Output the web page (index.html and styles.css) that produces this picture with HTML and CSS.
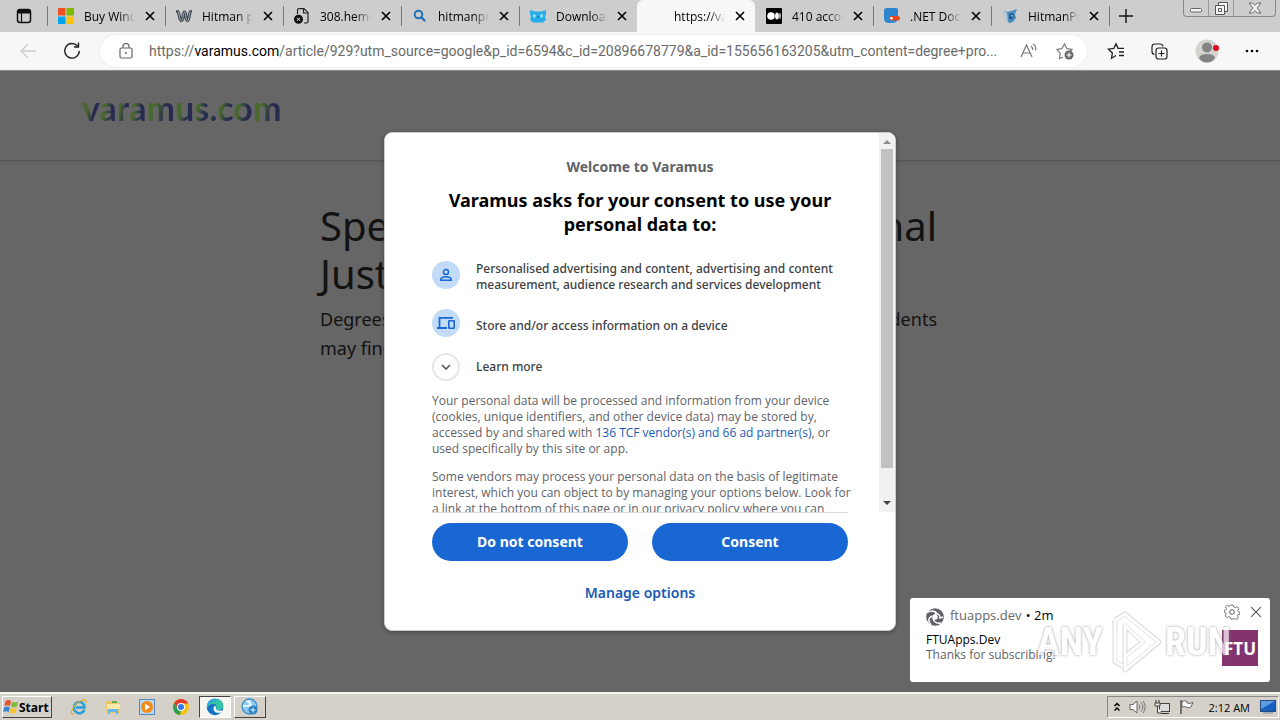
FILE: index.html
```html
<!DOCTYPE html>
<html lang="en">
<head>
<meta charset="utf-8">
<title>varamus.com</title>
<link rel="stylesheet" href="styles.css">
</head>
<body>
<svg class="defs" aria-hidden="true">
  <symbol id="close" viewBox="0 0 10 10"><path d="M1 1l8 8M9 1L1 9" fill="none" stroke="currentColor" stroke-width="1.6"/></symbol>
</svg>

<header class="tabbar">
  <button class="tab-actions" aria-label="Tab actions menu">
    <svg width="16" height="16" viewBox="0 0 16 16"><rect x="1.5" y="1.5" width="13" height="13" rx="2.5" fill="none" stroke="#111" stroke-width="1.5"/><path d="M2 2h12v3.5H2z" fill="#111"/><path d="M5.5 5v9" stroke="#111" stroke-width="1.2"/></svg>
  </button>
  <nav class="tabs" aria-label="Open tabs">
    <div class="tab">
      <svg class="fav" viewBox="0 0 16 16"><path d="M0 0h7.5v7.5H0z" fill="#f25022"/><path d="M8.500 0H16v7.500H8.500z" fill="#7fba00"/><path d="M0 8.500h7.500V16H0z" fill="#00a4ef"/><path d="M8.500 8.500H16V16H8.500z" fill="#ffc20a"/></svg>
      <span class="title">Buy Wind</span><button class="x" aria-label="Close tab"><svg><use href="#close"/></svg></button>
    </div>
    <div class="tab">
      <svg class="fav" viewBox="0 0 16 16"><path d="M1.500 3.500C3.500 3.500 3 12.500 5.300 12.500S7 4 8.500 4s1 8.500 3 8.500 1.500-9 3.200-9" fill="none" stroke="#3c4650" stroke-width="3.200" stroke-linecap="round"/><path d="M1.500 3.500C3.500 3.500 3 12.500 5.300 12.500S7 4 8.500 4s1 8.500 3 8.500 1.500-9 3.200-9" fill="none" stroke="#c4cace" stroke-width=".8"/></svg>
      <span class="title">Hitman pr</span><button class="x" aria-label="Close tab"><svg><use href="#close"/></svg></button>
    </div>
    <div class="tab">
      <svg class="fav" viewBox="0 0 16 16"><path d="M3.500 6V2Q3.500.7 5 .7h5l4 4v8.800q0 1.500-1.500 1.500H10M9.500 1v4H14" fill="none" stroke="#222" stroke-width="1.200"/><circle cx="4.500" cy="11.300" r="4.500" fill="#111"/><path d="M3 9.800l3 3M6 9.800l-3 3" stroke="#fff"/></svg>
      <span class="title">308.heme</span><button class="x" aria-label="Close tab"><svg><use href="#close"/></svg></button>
    </div>
    <div class="tab">
      <svg class="fav" viewBox="0 0 16 16"><circle cx="6.500" cy="6.500" r="3.800" fill="none" stroke="#2472ba" stroke-width="2"/><path d="M9.500 9.500l3 3" stroke="#2472ba" stroke-width="2.400" stroke-linecap="round"/></svg>
      <span class="title">hitmanpro</span><button class="x" aria-label="Close tab"><svg><use href="#close"/></svg></button>
    </div>
    <div class="tab">
      <svg class="fav" viewBox="0 0 16 16"><path d="M0 2l5 1.500h6L16 2v4l-1 3 1 3-3 2.500H3L0 12l1-3-1-3z" fill="#27aee8"/><path d="M3 6l3 1-1 3-2-1zM13 6l-3 1 1 3 2-1z" fill="#9ce2ff"/><path d="M7 8l1 3 1-3z" fill="#1476b4"/></svg>
      <span class="title">Download</span><button class="x" aria-label="Close tab"><svg><use href="#close"/></svg></button>
    </div>
    <div class="tab active">
      <span class="fav"></span>
      <span class="title">https://va</span><button class="x" aria-label="Close tab"><svg><use href="#close"/></svg></button>
    </div>
    <div class="tab">
      <svg class="fav" viewBox="0 0 16 16"><rect width="16" height="16" rx="1" fill="#000"/><circle cx="5" cy="8" r="3.800" fill="#fff"/><ellipse cx="11" cy="8" rx="1.900" ry="3.600" fill="#fff"/><ellipse cx="14" cy="8" rx=".7" ry="3.200" fill="#fff"/></svg>
      <span class="title">410 accou</span><button class="x" aria-label="Close tab"><svg><use href="#close"/></svg></button>
    </div>
    <div class="tab">
      <svg class="fav" viewBox="0 0 16 16"><path d="M3 0h9q2 0 2 2v7q0 6-6 6H5q-5 0-5-5V3q0-3 3-3z" fill="#2f86d0"/><rect x="5" y="8" width="11" height="4.500" rx="2.200" fill="#e8481c"/><circle cx="7.500" cy="10.200" r="1.300" fill="#fff"/></svg>
      <span class="title">.NET Docu</span><button class="x" aria-label="Close tab"><svg><use href="#close"/></svg></button>
    </div>
    <div class="tab">
      <svg class="fav" viewBox="0 0 16 16"><path d="M1 3l4 1 4-1 6-2-2 5 1 4-3 4-4 1-3-4z" fill="#4b8fbe"/><path d="M1 3l4 2 1 8-3-3z" fill="#b4cfe0"/><path d="M7 6l4-1 1 4-3 3-2-2z" fill="#1f5f90"/><path d="M8.500 7.500l2-.5v2z" fill="#cfe6f4"/></svg>
      <span class="title">HitmanPr</span><button class="x" aria-label="Close tab"><svg><use href="#close"/></svg></button>
    </div>
    <button class="newtab" aria-label="New tab"><svg width="14" height="14" viewBox="0 0 14 14"><path d="M7 0v14M0 7h14" stroke="#111" stroke-width="1.400"/></svg></button>
  </nav>
  <div class="winctl">
    <button aria-label="Minimize"><svg width="12" height="12" viewBox="0 0 12 12"><rect x=".5" y="6.500" width="11" height="3.500" rx="1" fill="#f4f4f4" stroke="#666"/></svg></button>
    <button aria-label="Restore"><svg width="13" height="13" viewBox="0 0 13 13"><path d="M3.500.5h9v9h-9z" fill="#f4f4f4" stroke="#555"/><path d="M.5 3.500h9v9h-9zM3.500 6.500h3v3h-3z" fill="#f4f4f4" stroke="#555"/></svg></button>
    <button aria-label="Close"><svg width="14" height="12" viewBox="0 0 14 12"><path d="M1 1h3.500L7 3.500 9.500 1H13L9 6l4 5H9.500L7 8.500 4.500 11H1l4-5z" fill="#f4f4f4" stroke="#666"/></svg></button>
  </div>
</header>

<div class="toolbar">
  <button class="tool" aria-label="Back"><svg width="18" height="16" viewBox="0 0 18 16"><path d="M9 1L2 8l7 7M2 8h15" fill="none" stroke="#ccc" stroke-width="1.300"/></svg></button>
  <button class="tool" aria-label="Refresh"><svg width="18" height="18" viewBox="0 0 18 18"><path d="M14.500 4A7.300 7.300 0 1 0 16.300 9M15.500.5V5H11" fill="none" stroke="#222" stroke-width="1.400"/></svg></button>
  <div class="address">
    <svg width="14" height="16" viewBox="0 0 14 16"><rect x="1" y="5" width="12" height="10" rx="1.500" fill="none" stroke="#666" stroke-width="1.200"/><path d="M4 5V3.500a3 3 0 0 1 6 0V5" fill="none" stroke="#666" stroke-width="1.200"/><circle cx="7" cy="10" r="1" fill="#666"/></svg>
    <span class="url">https://<b>varamus.com</b>/article/929?utm_source=google&amp;p_id=6594&amp;c_id=20896678779&amp;a_id=155656163205&amp;utm_content=degree+pro...</span>
    <button aria-label="Read aloud"><svg width="18" height="16" viewBox="0 0 18 16"><path d="M1 14L6.500 2 12 14M3 10h7M11 3q2 1.500 1.500 4M13 1q3.500 2 2.500 6.500" fill="none" stroke="#777" stroke-width="1.200"/></svg></button>
    <button aria-label="Add to favorites"><svg width="18" height="18" viewBox="0 0 18 18"><path d="M7 15l-3.500 1.500.7-5L1 7.500l4.800-.8L8.500 2l2.500 4.700 5 .8-2 2" fill="none" stroke="#777" stroke-width="1.200"/><circle cx="13" cy="13" r="4.500" fill="#666"/><path d="M13 10.500v5M10.500 13h5" stroke="#fff" stroke-width="1.200"/></svg></button>
  </div>
  <div class="actions">
    <button aria-label="Favorites"><svg width="18" height="18" viewBox="0 0 18 18"><path d="M9 13.500l-4.500 2.700.9-5.200-4-3.800L6.800 6.500 9 1.800l2 4.500h6M12 10h5M12 13.500h5" fill="none" stroke="#222" stroke-width="1.300"/></svg></button>
    <button aria-label="Collections"><svg width="18" height="18" viewBox="0 0 18 18"><path d="M3.500 12.500Q1 12 1 9.500V5q0-3 3-3h5q2.500 0 3 2.500" fill="none" stroke="#222" stroke-width="1.200"/><rect x="5" y="6" width="11" height="11" rx="2.500" fill="none" stroke="#222" stroke-width="1.200"/><path d="M10.500 8.500v6M7.500 11.500h6" stroke="#222" stroke-width="1.200"/></svg></button>
    <button aria-label="Profile"><svg width="24" height="24" viewBox="0 0 24 24"><circle cx="12" cy="12" r="11.500" fill="#d5d3d0"/><circle cx="12" cy="8.500" r="5" fill="#858282"/><path d="M4 19q1-4 8-4t8 4q-3 4.500-8 4.500T4 19z" fill="#858282"/><circle cx="21" cy="9" r="3" fill="#e00b1c"/></svg></button>
    <button aria-label="Settings and more"><svg width="14" height="4" viewBox="0 0 14 4"><circle cx="2" cy="2" r="1.300"/><circle cx="7" cy="2" r="1.300"/><circle cx="12" cy="2" r="1.300"/></svg></button>
  </div>
</div>

<main class="page">
  <div class="site-header">
    <a class="logo" href="#"><i>v</i><i>a</i><i>r</i><i>a</i><i>m</i><i>u</i><i>s</i><i>.</i><i>c</i><i>o</i><i>m</i></a>
  </div>
  <article class="article">
    <h1><span>Spec</span><span>nal</span></h1>
    <h1>Just</h1>
    <p><span>Degrees</span><span>dents</span></p>
    <p>may find</p>
  </article>

  <section class="dialog" role="dialog" aria-labelledby="ask">
    <div class="scroller">
      <p class="welcome">Welcome to Varamus</p>
      <h2 id="ask">Varamus asks for your consent to use your<br>personal data to:</h2>
      <ul class="purposes">
        <li><span class="disc"><svg width="14" height="14" viewBox="0 0 14 14"><circle cx="7" cy="4" r="2.500" fill="none" stroke="#1967d2" stroke-width="1.400"/><path d="M1.700 12.300v-1Q2.500 8.700 7 8.700t5.300 2.600v1z" fill="none" stroke="#1967d2" stroke-width="1.400"/></svg></span>
          <span>Personalised advertising and content, advertising and content<br>measurement, audience research and services development</span></li>
        <li><span class="disc"><svg width="20" height="14" viewBox="0 0 20 14"><path d="M17 1.800H3.500V11M1 12h10" fill="none" stroke="#1967d2" stroke-width="1.800"/><rect x="12.800" y="4.800" width="5.400" height="7.400" rx=".5" fill="none" stroke="#1967d2" stroke-width="1.600"/></svg></span>
          <span class="single">Store and/or access information on a device</span></li>
        <li><button class="disc more" id="learn" aria-label="Learn more"><svg width="10" height="6" viewBox="0 0 10 6"><path d="M1 1l4 4 4-4" fill="none" stroke="#555" stroke-width="1.600"/></svg></button>
          <label for="learn">Learn more</label></li>
      </ul>
      <p class="legal">Your personal data will be processed and information from your device<br>(cookies, unique identifiers, and other device data) may be stored by,<br>accessed by and shared with <a href="#">136 TCF vendor(s) and 66 ad partner(s)</a>, or<br>used specifically by this site or app.</p>
      <p class="legal">Some vendors may process your personal data on the basis of legitimate<br>interest, which you can object to by managing your options below. Look for<br>a link at the bottom of this page or in our privacy policy where you can</p>
      <div class="scrollbar" aria-hidden="true">
        <svg width="8" height="4" viewBox="0 0 8 4"><path d="M4 0l4 4H0z" fill="#8c8c8c"/></svg>
        <span class="thumb"></span>
        <svg class="down" width="8" height="4" viewBox="0 0 8 4"><path d="M0 0h8L4 4z" fill="#444"/></svg>
      </div>
    </div>
    <div class="choices">
      <button class="pill">Do not consent</button>
      <button class="pill">Consent</button>
    </div>
    <button class="manage">Manage options</button>
  </section>
</main>

<aside class="toast">
  <svg class="globe" width="18" height="18" viewBox="0 0 18 18"><circle cx="9" cy="9" r="8.800" fill="#5f6368"/><path d="M1 4.500Q8 1 11 6M5 17Q0 11 6 8M15 15q-7 1-8-5M9 6q5-1 5 4l3-1" fill="none" stroke="#fff" stroke-width="1.500"/><circle cx="9" cy="9" r="2.700" fill="#fff"/></svg>
  <div class="note">
    <p class="source"><span>ftuapps.dev</span> • 2m</p>
    <p class="subject">FTUApps.Dev</p>
    <p class="message">Thanks for subscribing!</p>
  </div>
  <div class="toast-side">
    <div class="toast-buttons">
      <button aria-label="Notification settings"><svg width="16" height="16" viewBox="0 0 16 16"><circle cx="8" cy="8" r="2.300" fill="none" stroke="#555"/><path d="M6.700 1h2.600l.5 2 1.500.7 1.900-1 1.600 1.700-1 1.800.5 1.500 1.700.6v1.800l-1.900.6-.6 1.500.9 1.800-1.800 1.500-1.600-1-1.500.5L9.300 15H6.700l-.6-1.800-1.500-.6-1.800 1L1.200 12l1-1.900-.7-1.300L0 8.300V6.700l1.800-.6.6-1.500-1-1.700 1.700-1.600 1.700.9 1.400-.5z" fill="none" stroke="#666" stroke-width=".9"/></svg></button>
      <button aria-label="Dismiss"><svg width="10" height="10" viewBox="0 0 10 10"><path d="M0 0l10 10M10 0L0 10" stroke="#555" stroke-width="1.100"/></svg></button>
    </div>
    <span class="badge">FTU</span>
  </div>
</aside>

<div class="watermark"><span>ANY</span>
  <svg width="58" height="64" viewBox="0 0 58 64"><path d="M10 10v42l8 4M10 10l10-6 34 28-34 28V16M20 16v30l18-14z" fill="none" stroke="#999" stroke-width="5" stroke-linejoin="round" opacity=".45"/><path d="M10 10v42l8 4M10 10l10-6 34 28-34 28V16M20 16v30l18-14z" fill="#fff" fill-opacity=".4" stroke="#fff" stroke-width="2.500" stroke-linejoin="round"/></svg>
  <span>RUN</span></div>

<footer class="taskbar">
  <button class="start"><svg width="16" height="16" viewBox="0 0 16 16"><path d="M2.500 2q3-2 5.500 0L7 7Q4.500 5.500 1.500 7z" fill="#e5532d"/><path d="M9 2.500q3 2 6 0l-1 5q-3 1.500-6 0z" fill="#7fb93c"/><path d="M1.300 8.200q3-1.500 5.500 0l-1 5Q3 11.500 0 13z" fill="#3b84cf"/><path d="M7.800 8.700q3 1.800 6 0l-1 5q-3 1.500-6 0z" fill="#f7c331"/></svg>Start</button>
  <button class="quick" aria-label="Internet Explorer"><svg width="18" height="18" viewBox="0 0 18 18"><path d="M14.500 12Q12 16 8 15 3.500 13.500 4 9q1-5 5.500-5T14.500 9.500H6" fill="none" stroke="#28a0dc" stroke-width="2.600"/><path d="M16 5q1-4-3-3Q6 4 2 12q-2 5 2 4" fill="none" stroke="#e2ad2c" stroke-width="1.300"/></svg></button>
  <button class="quick" aria-label="File Explorer"><svg width="18" height="18" viewBox="0 0 18 18"><path d="M2 3h5l1 2h8v10H2z" fill="#e8c565"/><path d="M3 6h13v5H3z" fill="#f9e9a9"/><path d="M4 16v-5h10v5h-2v-2H6v2z" fill="#65b5e8"/><path d="M8 3h5v2H8z" fill="#66ae55"/></svg></button>
  <button class="quick" aria-label="Media Player"><svg width="18" height="18" viewBox="0 0 18 18"><rect x="1.500" y="1.500" width="15" height="15" fill="#b9d8f2" stroke="#5688bd"/><circle cx="9" cy="9" r="6" fill="#f28a1a"/><path d="M7 5.500l5 3.500-5 3.500z" fill="#fff"/></svg></button>
  <button class="quick" aria-label="Chrome"><svg width="18" height="18" viewBox="0 0 18 18"><circle cx="9" cy="9" r="8" fill="#fbc116"/><path d="M2 5Q4.500 1 9 1q5 0 7.200 4.500H9L5.800 11z" fill="#e33b2e"/><path d="M2 5l4 6.200 3 1.500L8 17Q1 16 1 9q0-2 1-4z" fill="#2da14d"/><circle cx="9" cy="9" r="4" fill="#fff"/><circle cx="9" cy="9" r="3" fill="#3578e5"/></svg></button>
  <div class="apps">
    <button class="app pressed" aria-label="Edge"><svg width="18" height="18" viewBox="0 0 18 18"><circle cx="9" cy="9" r="8.300" fill="#1674c8"/><path d="M1 8Q2 1 9 .7 17 1 17.300 8q-.5 4-5 4-2.500 0-2-2 1-4-3-4Q3 6 1 10z" fill="#34c6a4"/><path d="M1 8Q2 1 9 .7q3 0 5.500 2Q10 1 6 4 2 6 1 10z" fill="#2ba8dc"/><path d="M8 8q-2 6 4 7 2.500 0 4-1 1-2-2-1.500-5 .5-4-4z" fill="#e9f7ff"/></svg></button>
    <button class="app" aria-label="Web tool"><svg width="18" height="18" viewBox="0 0 18 18"><circle cx="8.500" cy="8.500" r="7.500" fill="#8ccbf1" stroke="#3e91cb" stroke-width="1.300"/><path d="M2 8h8M5 3q6 1 5 6M8.500 2v5" stroke="#fff" stroke-width="1.500" fill="none"/><circle cx="12" cy="12" r="4.500" fill="#2d83c2"/><path d="M12 9.500v5M9.500 12h5" stroke="#e4f5ff"/></svg></button>
  </div>
  <div class="tray">
    <svg width="8" height="12" viewBox="0 0 8 12"><path d="M1.500 5L4 2.500 6.500 5M1.500 9.500L4 7l2.500 2.500" fill="none" stroke="#000" stroke-width="1.500"/></svg>
    <svg width="17" height="16" viewBox="0 0 17 16"><path d="M1 5.500h3L8 2v12l-4-3.500H1z" fill="#fafafa" stroke="#666"/><path d="M10 5.500q2 2.500 0 5M12 3.500q4 4.500 0 9M14 2q4.500 6 0 12" fill="none" stroke="#777"/></svg>
    <svg width="17" height="16" viewBox="0 0 17 16"><rect x="5.500" y="4.500" width="10" height="8" fill="#ddd" stroke="#444"/><path d="M7 14.500h8M2 1v3M5 1v3" stroke="#333"/><path d="M1 4h5v3H1zM3.500 7v7h4" fill="#eee" stroke="#444"/></svg>
    <svg width="16" height="16" viewBox="0 0 16 16"><path d="M2 1v14" stroke="#555" stroke-width="1.500"/><path d="M3 2.500q3-1.500 5 0v1.500q3 1 6-.5l-2.500 5q-3 1-4-.5-2-1-4.500 0z" fill="#fff" stroke="#666"/></svg>
    <time>2:12 AM</time>
    <svg width="16" height="14" viewBox="0 0 16 14"><rect x=".5" y=".5" width="15" height="11" fill="#1760bd" stroke="#234d82"/><path d="M1 1h14L1 9z" fill="#5c9de4"/><path d="M3 13h10" stroke="#789"/></svg>
  </div>
</footer>
</body>
</html>
```
FILE: styles.css
```css
* { box-sizing: border-box; }
body {
  margin: 0;
  height: 100vh;
  display: flex;
  flex-direction: column;
  overflow: hidden;
  position: relative;
  font-family: "Open Sans", "Noto Sans", sans-serif;
  font-size: 12px;
  color: #000;
}
button { font: inherit; color: inherit; background: none; border: 0; padding: 0; display: flex; align-items: center; justify-content: center; }
h1, h2, p, ul { margin: 0; padding: 0; }
a { text-decoration: none; }
.defs { display: none; }

.tabbar { display: flex; height: 32px; background: #cdcdcd; }
.tab-actions { width: 47px; }
.tabs { display: flex; flex: 1; min-width: 0; }
.tab {
  display: flex;
  align-items: center;
  flex: 0 1 118px;
  min-width: 0;
  padding: 0 5px 0 11px;
  background: linear-gradient(#777, #777) left 6px / 1px 20px no-repeat;
}
.tab.active { background: #f7f7f7; border-radius: 6px 6px 0 0; }
.active + .tab { background: none; }
.fav { width: 16px; height: 16px; flex: none; margin-right: 10px; }
.title {
  flex: 1;
  overflow: hidden;
  white-space: nowrap;
  -webkit-mask-image: linear-gradient(90deg, #000 65%, transparent 95%);
  mask-image: linear-gradient(90deg, #000 65%, transparent 95%);
}
.x { width: 20px; height: 20px; margin-left: 2px; flex: none; }
.x svg { width: 10px; height: 10px; }
.newtab { width: 34px; background: linear-gradient(#777, #777) left 6px / 1px 20px no-repeat; }
.winctl { display: flex; height: 17px; margin-right: 4px; border: 1px solid #888; border-top: 0; border-radius: 0 0 4px 4px; }
.winctl button { width: 25px; border-right: 1px solid #999; }
.winctl button:last-child { width: 41px; border-right: 0; }

.toolbar { display: flex; align-items: center; height: 39px; padding: 0 21px 0 19px; background: #f7f7f7; border-bottom: 1px solid #999; }
.tool { width: 18px; margin-right: 26px; }
.tool + .tool { margin-right: 19px; }
.address { flex: 1; min-width: 0; height: 32px; display: flex; align-items: center; gap: 18px; padding: 0 13px 0 19px; border-radius: 16px; background: #fff; box-shadow: 0 0 2px #ddd; }
.url { flex: 1; min-width: 0; overflow: hidden; white-space: nowrap; font-family: Roboto, sans-serif; font-size: 14px; margin: 0 -6px 0 -2px; color: #6a6a6a; }
.url b { font-weight: 400; color: #000; }
.actions { display: flex; align-items: center; gap: 26px; margin-left: 20px; }

.page { flex: 1; min-height: 0; position: relative; background: #666; }
.site-header { height: 90px; padding: 16px 82px; border-bottom: 1px solid #555; box-shadow: 0 1px 3px #5a5a5a; }
.logo { font: 700 34px/42px Lato, sans-serif; }
.logo i { font-style: normal; color: transparent; background: linear-gradient(100deg, #47692c 35%, #262b50 65%); -webkit-background-clip: text; background-clip: text; }
.article { max-width: 640px; margin: 41px auto 0; padding-right: 23px; color: #121212; font-family: "Noto Sans", sans-serif; }
.article h1 { display: flex; justify-content: space-between; font-size: 40px; line-height: 48px; font-weight: 400; }
.article p { display: flex; justify-content: space-between; font-size: 18px; line-height: 29px; }
.article h1 + p { margin-top: 7px; }

.dialog {
  position: absolute;
  top: 61px;
  left: 50%;
  width: 512px;
  margin-left: -256px;
  padding-bottom: 26px;
  border: 1px solid #ccc;
  border-radius: 8px;
  background: #fff;
  box-shadow: 0 1px 4px #444;
  overflow: hidden;
  font-family: "Noto Sans", sans-serif;
}
.scroller { position: relative; height: 379px; padding: 24px 47px 0; overflow: hidden; white-space: nowrap; line-height: 16px; color: #3c4043; }
.welcome { font-size: 14px; line-height: 20px; font-weight: 700; text-align: center; color: #5f6368; }
.scroller h2 { margin-top: 11px; font-size: 18px; line-height: 24px; font-weight: 700; text-align: center; color: #000; }
.purposes { list-style: none; margin: 25px 0 12px; display: grid; gap: 16px; font-weight: 500; }
.purposes li { display: flex; align-items: center; gap: 16px; }
.purposes li:first-child { align-items: flex-start; }
.single { padding-top: 6px; }
.disc { width: 28px; height: 28px; flex: none; display: flex; align-items: center; justify-content: center; border-radius: 50%; background: #c2dbf9; }
.disc.more { background: #fff; border: 2px solid #e6e6e6; }
.legal { margin-bottom: 12px; color: #5f6368; font-family: "Open Sans", sans-serif; }
.legal a, .manage { color: #1a5ab5; }
.scrollbar { position: absolute; top: 0; right: 0; bottom: 0; width: 16px; padding: 7px 1px; display: flex; flex-direction: column; align-items: center; background: #f1f1f1; }
.thumb { width: 12px; height: 319px; margin-top: 5px; background: #c1c1c1; }
.down { margin-top: auto; }
.choices { display: flex; gap: 24px; margin: 0 47px; padding-top: 10px; border-top: 1px solid #dadce0; }
.pill { flex: 1; height: 38px; padding-bottom: 2px; border-radius: 19px; background: #1967d2; color: #fff; font-size: 14px; font-weight: 700; }
.manage { margin: 19px auto 0; height: 24px; font-size: 14px; font-weight: 600; }

.toast { position: absolute; right: 10px; bottom: 38px; width: 360px; height: 84px; padding: 4px 9px 0 16px; display: flex; gap: 6px; border-radius: 3px; background: #fff; }
.globe { margin-top: 6px; flex: none; }
.note { flex: 1; padding-top: 4px; white-space: nowrap; }
.source { line-height: 18px; font-size: 13px; }
.source span { color: #666; margin-right: 1px; }
.subject, .message { line-height: 15px; margin-left: -24px; }
.subject { margin-top: 8px; }
.message { color: #5f6368; }
.toast-buttons { display: flex; align-items: center; gap: 11px; height: 20px; }
.badge { display: flex; align-items: center; justify-content: center; width: 36px; height: 36px; margin: 8px 0 0 -2px; background: #83346f; color: #fff; font-size: 17px; font-weight: 700; }

.watermark { position: absolute; right: 49px; bottom: 46px; display: flex; align-items: center; gap: 2px; font: 700 38px/64px "Liberation Sans Narrow", "Roboto Condensed", Roboto, sans-serif; color: #fff; opacity: .7; text-shadow: 0 0 3px #777; pointer-events: none; }

.taskbar { height: 28px; display: flex; align-items: center; padding: 0 1px 0 2px; background: #d5d0c8; border-top: 2px solid #f5f5f3; }
.start { height: 22px; padding: 0 2px 0 0; margin-right: 18px; font-size: 12px; font-weight: 700; border: 1px solid; border-color: #fff #444 #444 #fff; }
.quick { width: 18px; margin-right: 16px; }
.apps { display: flex; gap: 3px; margin-left: -7px; }
.app { width: 32px; height: 22px; border: 1px solid; border-color: #fff #444 #444 #fff; }
.pressed { background: #f6f5f2; border-color: #444 #fff #fff #444; }
.tray { height: 22px; margin-left: auto; display: flex; align-items: center; gap: 8px; padding: 0 2px 0 5px; border: 1px solid; border-color: #888 #fff #fff #888; }
.tray time { margin: 0 2px 0 6px; font-size: 11px; }
```
